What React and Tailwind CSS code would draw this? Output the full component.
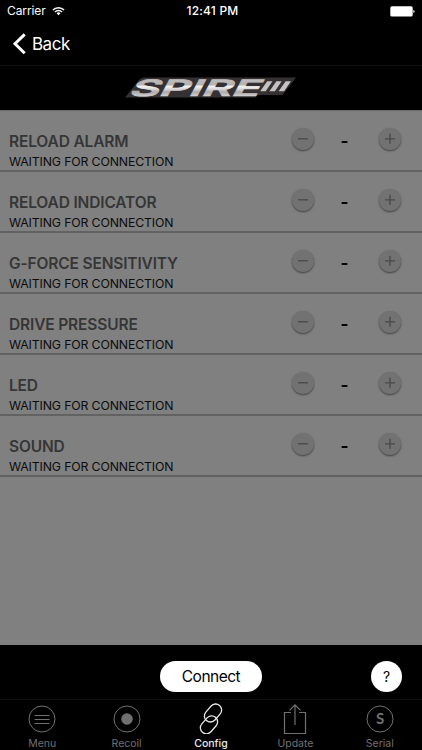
import React from "react";

const settings = [
  "RELOAD ALARM",
  "RELOAD INDICATOR",
  "G-FORCE SENSITIVITY",
  "DRIVE PRESSURE",
  "LED",
  "SOUND",
];

const WifiIcon = (props) => (
  <svg {...props} viewBox="0 0 14 10" fill="none" stroke="#fff" strokeWidth="1.6">
    <path d="M1 3.9a8.4 8.4 0 0 1 12 0" />
    <path d="M3.2 6.1a5.4 5.4 0 0 1 7.6 0" />
    <path d="M7 9.6L4.9 7.5a3 3 0 0 1 4.2 0z" fill="#fff" stroke="none" />
  </svg>
);

const BatteryIcon = (props) => (
  <svg {...props} viewBox="0 0 26 11" fill="#fff">
    <rect x="0.3" y="0.3" width="22.4" height="10.2" rx="1.6" />
    <path d="M23.4 3.7c1.6.4 1.6 3 0 3.4z" />
  </svg>
);

const SpireLogo = (props) => (
  <svg {...props} viewBox="0 0 174 24">
    <defs>
      <linearGradient id="chrome" gradientUnits="userSpaceOnUse" x1="0" y1="-17" x2="0" y2="0">
        <stop offset="0" stopColor="#c0bebf" />
        <stop offset="0.35" stopColor="#b4b2b3" />
        <stop offset="0.48" stopColor="#f4f4f4" />
        <stop offset="0.62" stopColor="#d8d6d7" />
        <stop offset="0.8" stopColor="#acaaab" />
        <stop offset="1" stopColor="#cccacb" />
      </linearGradient>
    </defs>
    <path d="M1 21.5L9.5 11L14.5 4.5Q17 1.5 21 1.5H172L158.5 19H134L131 21.5Z" fill="#353132" />
    <g transform="translate(4 19.5) skewX(-28)">
      <text
        x="0"
        y="0"
        textLength="130"
        lengthAdjust="spacingAndGlyphs"
        fill="url(#chrome)"
        stroke="url(#chrome)"
        strokeWidth="0.7"
        className="font-['Inter'] text-[22.5px] font-semibold"
      >
        SPIRE
      </text>
    </g>
    <g fill="#c4c2c3">
      <path d="M143.2 5.3h5.3l-6.8 10h-5.5z" />
      <path d="M152.4 5.3h5.3l-6.8 10h-5.5z" />
      <path d="M161.6 5.3h5.3l-6.8 10h-5.5z" />
    </g>
  </svg>
);

const MenuIcon = (props) => (
  <svg {...props} viewBox="0 0 30 32" fill="none" stroke="currentColor">
    <circle cx="15" cy="17" r="13" />
    <path d="M7.5 13.5h15M7.5 17.5h15M7.5 21.5h15" />
  </svg>
);

const RecoilIcon = (props) => (
  <svg {...props} viewBox="0 0 30 32" fill="none" stroke="currentColor">
    <circle cx="15" cy="17" r="13" />
    <circle cx="15" cy="17" r="5.8" fill="currentColor" stroke="none" />
  </svg>
);

const ConfigIcon = (props) => (
  <svg {...props} viewBox="0 0 30 32" fill="none" stroke="currentColor" strokeWidth="1.3">
    <rect x="-10" y="-6" width="20" height="12" rx="6" transform="translate(17 11) rotate(-49)" />
    <rect x="-10" y="-6" width="20" height="12" rx="6" transform="translate(13 22.8) rotate(-49)" />
  </svg>
);

const UpdateIcon = (props) => (
  <svg {...props} viewBox="0 0 30 32" fill="none" stroke="currentColor" strokeWidth="1.2">
    <path d="M11 10.5H4.5v21h21v-21H19" />
    <path d="M15 23V2.8M9.5 8.3L15 2.8l5.5 5.5" />
  </svg>
);

const SerialIcon = (props) => (
  <svg {...props} viewBox="0 0 30 32" fill="none" stroke="currentColor">
    <circle cx="15" cy="17" r="13" />
    <text
      x="15.2"
      y="22"
      textAnchor="middle"
      fill="currentColor"
      stroke="none"
      className="font-['Lato'] text-[15px] font-bold"
    >
      S
    </text>
  </svg>
);

const tabs = [
  { label: "Menu", Icon: MenuIcon },
  { label: "Recoil", Icon: RecoilIcon },
  { label: "Config", Icon: ConfigIcon, active: true },
  { label: "Update", Icon: UpdateIcon },
  { label: "Serial", Icon: SerialIcon },
];

const RoundButton = ({ label, children }) => (
  <button
    aria-label={label}
    className="flex h-[22px] w-[22px] items-center justify-center rounded-full bg-[#727272] shadow-[0_1px_2px_rgba(0,0,0,0.5)]"
  >
    <svg className="h-[22px] w-[22px]" viewBox="0 0 22 22" fill="none" stroke="#494949" strokeWidth="1.3">
      {children}
    </svg>
  </button>
);

const SettingRow = ({ title }) => (
  <div className="flex h-[61px] border-b-2 border-[#626262] pl-[9px] pr-[20.5px]">
    <div className="flex-1 whitespace-nowrap pt-[21px]">
      <h2 className="text-[15.5px] font-semibold leading-[20px] tracking-[-0.15px] text-[#363636]">{title}</h2>
      <p className="text-[12.3px] leading-[19px] tracking-[-0.15px] text-[#0c0c0c]">WAITING FOR CONNECTION</p>
    </div>
    <div className="flex w-[110px] items-start justify-between pt-[17px]">
      <RoundButton label="Decrease">
        <path d="M6 10.8h10" />
      </RoundButton>
      <span className="pr-[4px] pt-[2px] text-[17px] font-bold leading-[22px] text-black">-</span>
      <RoundButton label="Increase">
        <path d="M6 10.8h10M11 5.8v10" />
      </RoundButton>
    </div>
  </div>
);

export default function App() {
  return (
    <div className="flex h-[750px] w-[422px] flex-col overflow-hidden bg-black font-['Inter',sans-serif] text-white">
      <div className="grid h-[22px] grid-cols-3 items-center pl-[7px] pr-[6px] text-[12px] leading-[22px]">
        <div className="flex items-center gap-[6px]">
          <span className="tracking-[-0.1px]">Carrier</span>
          <WifiIcon className="h-[10px] w-[13px]" />
        </div>
        <span className="pl-[2px] text-center font-medium tracking-[0.2px]">12:41 PM</span>
        <BatteryIcon className="h-[11px] w-[26px] justify-self-end" />
      </div>

      <header className="flex h-[44px] items-center border-b border-[#111] pl-[12px]">
        <button className="flex items-center gap-[6px]">
          <svg className="h-[22px] w-[14px]" viewBox="0 0 14 22" fill="none" stroke="#fff" strokeWidth="3">
            <path d="M12.7 1.3L3 10.7l9.7 9.5" />
          </svg>
          <span className="text-[17px] leading-[22px] tracking-[-0.5px]">Back</span>
        </button>
      </header>

      <div className="flex h-[44px] items-center justify-center">
        <SpireLogo className="h-[24px] w-[174px] overflow-visible" />
      </div>

      <main className="h-[535px] border-t border-[#686868] bg-[#808080]">
        {settings.map((title) => (
          <SettingRow key={title} title={title} />
        ))}
      </main>

      <div className="grid h-[54px] grid-cols-[1fr_102px_1fr] items-center pt-[9px]">
        <button className="col-start-2 h-[31px] rounded-full bg-white text-[15.5px] leading-[31px] tracking-[-0.5px] text-black">
          Connect
        </button>
        <button className="mr-[20px] h-[31px] w-[31px] justify-self-end rounded-full bg-white text-[14px] text-black">
          ?
        </button>
      </div>

      <nav className="flex h-[51px] border-t border-[#111]">
        {tabs.map(({ label, Icon, active }) => (
          <button
            key={label}
            className={`flex flex-1 flex-col items-center text-[10.5px] leading-[13px] ${
              active ? "font-medium text-[#e8e8e8]" : "text-[#707070]"
            }`}
          >
            <Icon className="mt-[2px] h-[32px] w-[30px]" />
            <span className="mt-[3px]">{label}</span>
          </button>
        ))}
      </nav>
    </div>
  );
}
